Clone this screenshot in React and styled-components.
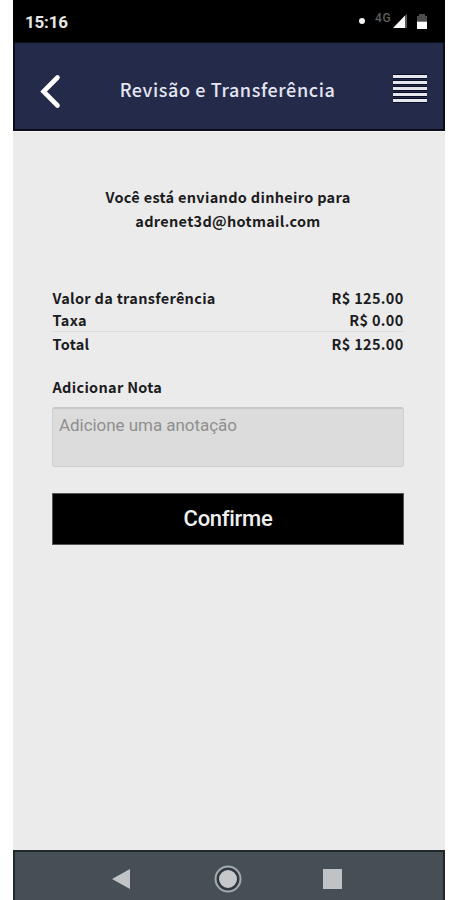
import React from 'react';
import styled, { createGlobalStyle } from 'styled-components';

const Global = createGlobalStyle`
  * { box-sizing: border-box; }
  body { margin: 0; background: #fff; }
`;

const source = '"Noto Sans CJK SC", "Noto Sans", sans-serif';

const Phone = styled.main`
  display: flex;
  flex-direction: column;
  width: 432px;
  height: 900px;
  margin-left: 13px;
  background: #ebebeb;
  overflow: hidden;
  font-family: ${source};
  color: #1c1c1e;
`;

const StatusBar = styled.div`
  display: flex;
  justify-content: space-between;
  height: 42px;
  padding: 0 17px 0 12px;
  background: #000;
`;

const Clock = styled.span`
  padding-top: 10px;
  font: 700 17px/24px Roboto, sans-serif;
  letter-spacing: -0.2px;
  color: #e6e6e6;
`;

const StatusIcons = styled.div`
  display: flex;
  height: 42px;
`;

const Dot = styled.i`
  width: 6px;
  height: 6px;
  margin: 18px 10px 0 0;
  border-radius: 50%;
  background: #f2f2f2;
`;

const Network = styled.span`
  width: 18px;
  padding-top: 11px;
  font: 500 12px/14px Roboto, sans-serif;
  letter-spacing: 0.6px;
  color: #5e5e5e;
`;

const Header = styled.header`
  display: grid;
  grid-template-columns: 60px 1fr 60px;
  align-items: center;
  height: 89px;
  border: solid #0b0d18;
  border-width: 1px 2px 2px;
  background: #242a49;
`;

const Title = styled.h1`
  margin: 5px 3px 0 0;
  text-align: center;
  font: 500 18px/28px ${source};
  letter-spacing: 0.6px;
  color: #e4e6f2;
  white-space: nowrap;
`;

const IconButton = styled.button`
  display: flex;
  justify-content: ${(p) => p.$align};
  padding: ${(p) => p.$pad};
  border: 0;
  background: none;
`;

const Content = styled.section`
  flex: 1;
  display: flex;
  flex-direction: column;
  padding: 53px 41px 0 39px;
  border-top: 1px solid #f7f7f7;
  font-size: 14.5px;
  font-weight: 700;
  letter-spacing: 0.3px;
`;

const Notice = styled.p`
  margin: 0 0 54px;
  text-align: center;
  line-height: 24px;
`;

const Row = styled.div`
  display: flex;
  justify-content: space-between;
  height: ${(p) => (p.$total ? '24px' : '22px')};
  padding: ${(p) => (p.$total ? '1px' : '0')} 0.5px 0;
  border-top: ${(p) => (p.$total ? '1px solid #dcdcdc' : '0')};
  line-height: 22px;
`;

const NoteLabel = styled.label`
  margin-top: 21px;
  padding-left: 0.5px;
  line-height: 22px;
`;

const Note = styled.textarea`
  display: block;
  height: 60px;
  margin-top: 9px;
  padding: 6px 6px;
  border: 1px solid #cfcfcf;
  border-top: 2px solid #c8c8c8;
  border-radius: 3px;
  background: #dcdcdc;
  font: 400 17px/20px Roboto, sans-serif;
  letter-spacing: -0.05px;
  resize: none;
  outline: none;
  &::placeholder { color: #8f8f8f; opacity: 1; }
`;

const Confirm = styled.button`
  height: 52px;
  margin-top: 26px;
  padding: 0;
  border: 1px solid #555;
  background: #000;
  color: #f0f0f0;
  font: 500 22px/50px Roboto, sans-serif;
  letter-spacing: -0.3px;
`;

const NavBar = styled.nav`
  height: 50px;
  border: solid #20282a;
  border-width: 2px 2px 0;
  background: #464e56;
`;

export default function App() {
  return (
    <>
      <Global />
      <Phone>
        <StatusBar>
          <Clock>15:16</Clock>
          <StatusIcons>
            <Dot />
            <Network>4G</Network>
            <svg width="35" height="42" viewBox="0 0 35 42">
              <path d="M11 16.500l3-2.500v14h-3z" fill="#555" />
              <path d="M0 28L12 15.500V28z" fill="#f7f7f7" />
              <path d="M24 21v-5h2v-2h6v2h2v5z" fill="#4c4c4c" />
              <path d="M24 21.500h10V29H24z" fill="#fff" />
            </svg>
          </StatusIcons>
        </StatusBar>
        <Header>
          <IconButton $align="flex-start" $pad="10px 0 0 24px" aria-label="Voltar">
            <svg width="24" height="36" viewBox="0 0 24 36">
              <path d="M18.500 4.500L4.500 18.500l14 14" fill="none" stroke="#fff" strokeWidth="4.600" strokeLinecap="round" />
            </svg>
          </IconButton>
          <Title>Revisão e Transferência</Title>
          <IconButton $align="flex-end" $pad="5px 16px 0 0" aria-label="Menu">
            <svg width="34" height="29" viewBox="0 0 34 29">
              <path d="M0 2.500h34M0 8.500h34M0 14.500h34M0 20.500h34M0 26.500h34" stroke="#0c1026" strokeWidth="5" />
              <path d="M0 2.500h34M0 8.500h34M0 14.500h34M0 20.500h34M0 26.500h34" stroke="#e6e7ee" strokeWidth="3" />
            </svg>
          </IconButton>
        </Header>
        <Content>
          <Notice>
            Você está enviando dinheiro para
            <br />
            adrenet3d@hotmail.com
          </Notice>
          <Row><span>Valor da transferência</span><span>R$ 125.00</span></Row>
          <Row><span>Taxa</span><span>R$ 0.00</span></Row>
          <Row $total><span>Total</span><span>R$ 125.00</span></Row>
          <NoteLabel htmlFor="note">Adicionar Nota</NoteLabel>
          <Note id="note" placeholder="Adicione uma anotação" />
          <Confirm>Confirme</Confirm>
        </Content>
        <NavBar>
          <svg width="428" height="48" viewBox="0 0 428 48">
            <path d="M97 27l18-10v20z" fill="#c0c4c6" />
            <circle cx="213" cy="27" r="12.500" fill="none" stroke="#a4aaae" strokeWidth="2" />
            <circle cx="213" cy="27" r="10" fill="#c5c8c9" stroke="#30373e" strokeWidth="2" />
            <path d="M308 17h19v20h-19z" fill="#bfc3c5" />
          </svg>
        </NavBar>
      </Phone>
    </>
  );
}
